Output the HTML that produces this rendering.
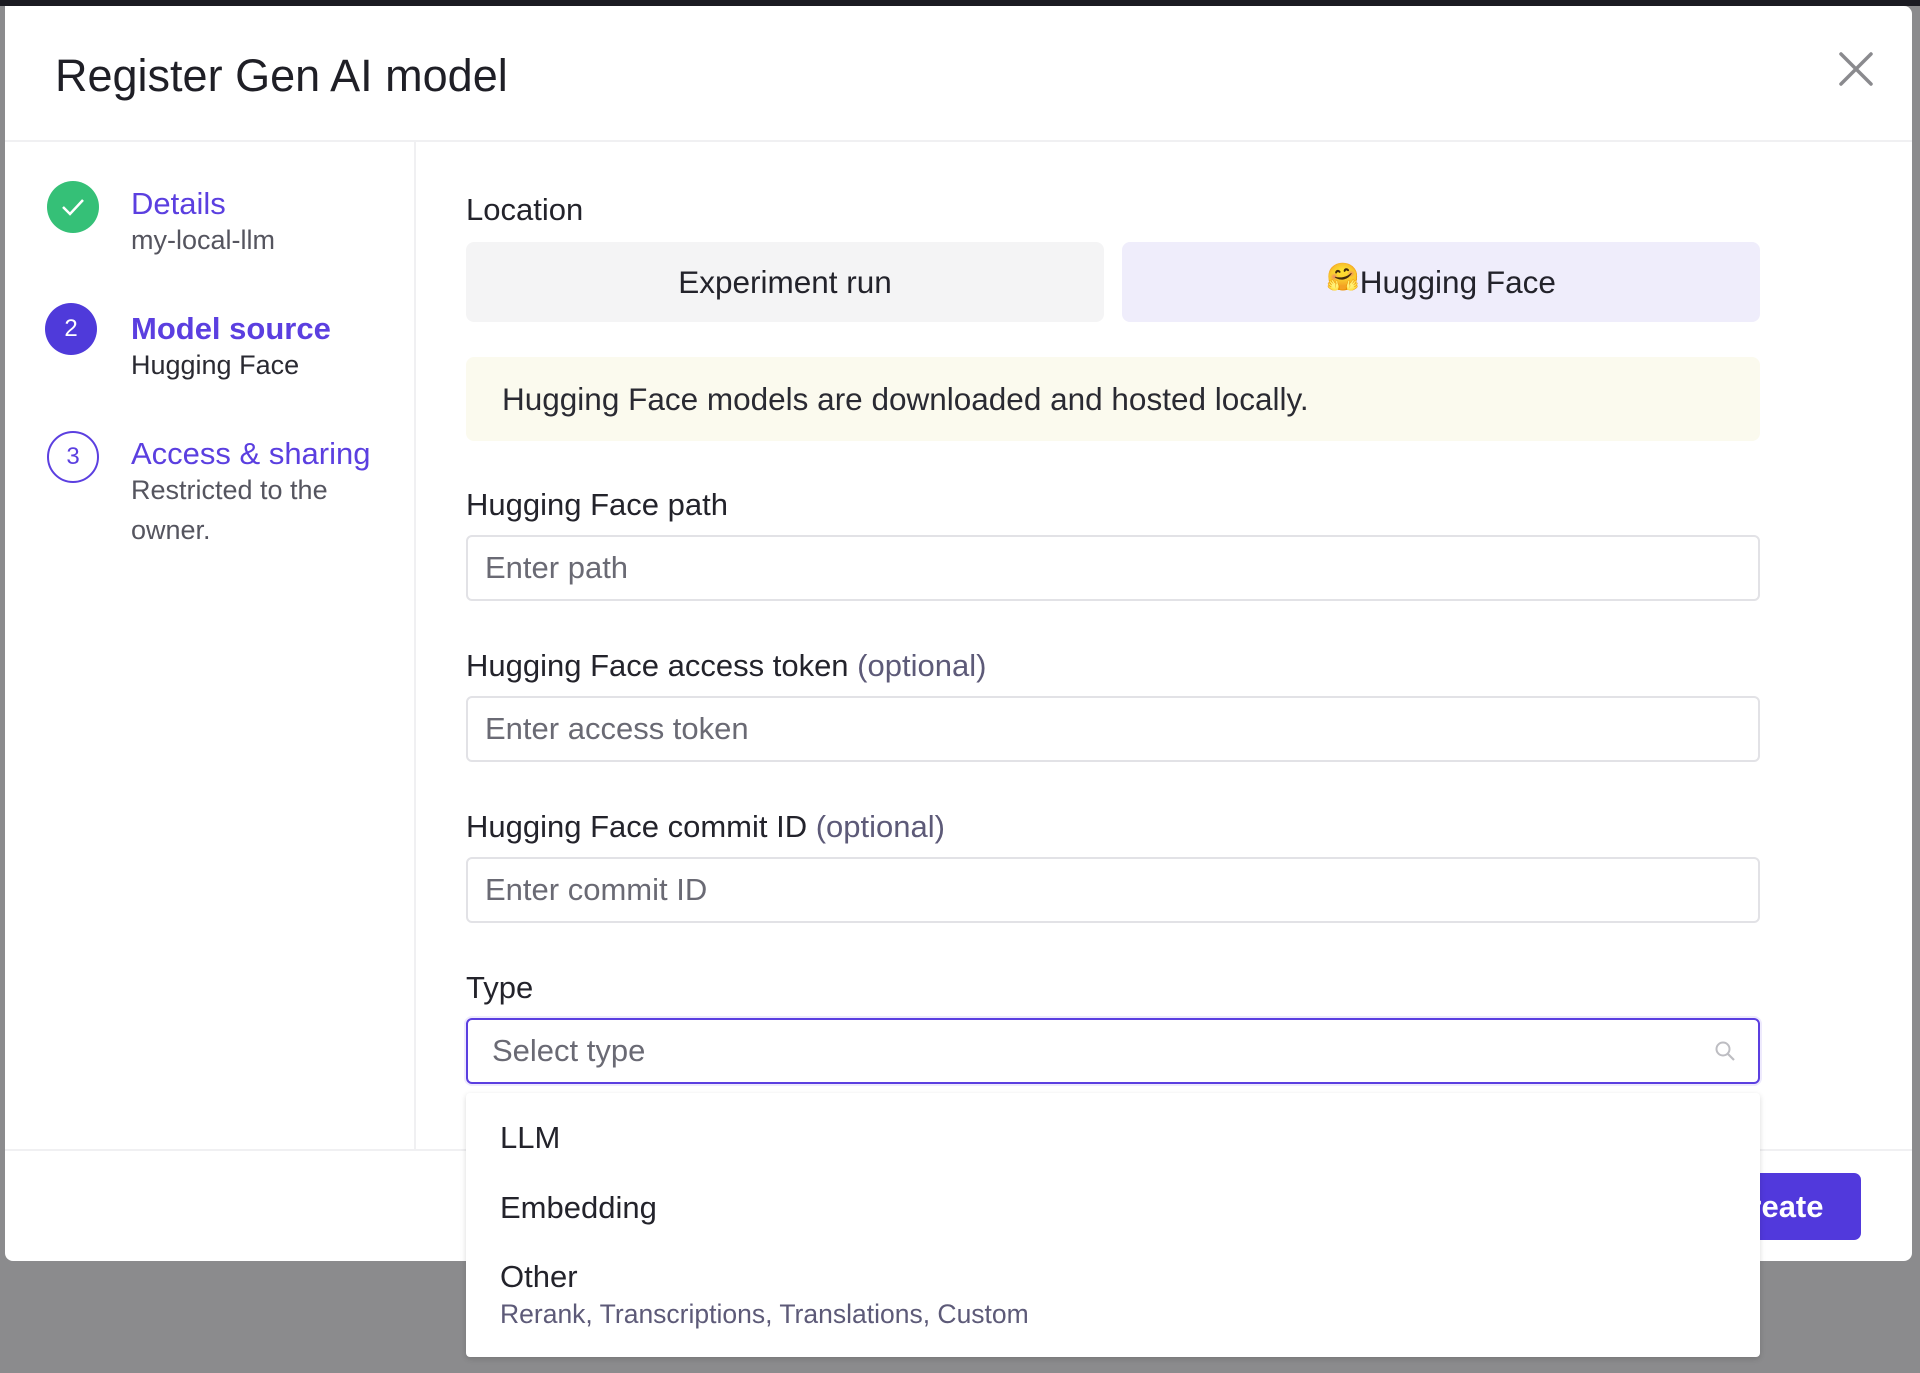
<!DOCTYPE html>
<html><head><style>
*{box-sizing:border-box;margin:0;padding:0}
body{width:1920px;height:1373px;background:#8b8b8d;font-family:"Liberation Sans",sans-serif;position:relative;overflow:hidden;color:#1f1f26}
.top{position:absolute;left:0;top:0;width:1920px;height:6px;background:#1b1b22}
.modal{position:absolute;left:5px;top:6px;width:1907px;height:1255px;background:#fff;border-radius:0 8px 8px 8px}
.abs{position:absolute}
.title{left:50px;top:44px;font-size:45px;color:#1f1f26}
.hsep{left:0;top:134px;width:1907px;height:2px;background:#f0f0f2}
.vsep{left:409px;top:136px;width:2px;height:1008px;background:#f0f0f2}
.fsep{left:0;top:1143px;width:1907px;height:2px;background:#f0f0f2}
.circ{width:52px;height:52px;border-radius:50%;display:flex;align-items:center;justify-content:center;font-size:24px}
.st{font-size:31px;color:#5b3fe0}
.sub{font-size:27px;color:#55555f}
.lbl{font-size:31px;color:#23232b;left:461px}
.opt{color:#5d5a78}
.inp{left:461px;width:1294px;height:66px;border:2px solid #e2e2e6;border-radius:6px;font-size:31px;color:#6a6a74;padding:0 0 0 17px;display:flex;align-items:center}
.tog{top:236px;height:80px;width:638px;border-radius:8px;display:flex;align-items:center;justify-content:center;font-size:31.5px;color:#23232b}
</style></head><body>
<div class="top"></div>
<div class="modal">
<div class="abs title">Register Gen AI model</div>
<svg class="abs" style="left:1833px;top:45px" width="36" height="36" viewBox="0 0 36 36"><path d="M3 3L33 33M33 3L3 33" stroke="#8a8a8e" stroke-width="3.5" stroke-linecap="round"/></svg>
<div class="abs hsep"></div><div class="abs vsep"></div><div class="abs fsep"></div>

<div class="abs circ" style="left:42px;top:175px;background:#35c077"><svg width="26" height="20" viewBox="0 0 26 20"><path d="M3 10l7 7L23 3" stroke="#fff" stroke-width="2.5" fill="none"/></svg></div>
<div class="abs st" style="left:126px;top:180px">Details</div>
<div class="abs sub" style="left:126px;top:219px">my-local-llm</div>

<div class="abs circ" style="left:40px;top:297px;background:#4f3ada;color:#fff">2</div>
<div class="abs st" style="left:126px;top:305px;font-weight:bold">Model source</div>
<div class="abs sub" style="left:126px;top:344px;color:#2a2a32">Hugging Face</div>

<div class="abs circ" style="left:42px;top:425px;border:2px solid #5b3fe0;color:#5b3fe0">3</div>
<div class="abs st" style="left:126px;top:430px">Access &amp; sharing</div>
<div class="abs sub" style="left:126px;top:469px">Restricted to the</div>
<div class="abs sub" style="left:126px;top:509px">owner.</div>

<div class="abs lbl" style="top:186px">Location</div>
<div class="abs tog" style="left:461px;background:#f4f4f5">Experiment run</div>
<div class="abs tog" style="left:1117px;background:#efedfb"><span style="font-size:27px;margin-top:-10px">🤗</span>Hugging Face</div>
<div class="abs" style="left:461px;top:351px;width:1294px;height:84px;background:#fbfaee;border-radius:8px;font-size:31.5px;color:#2a2a32;padding:0 0 0 36px;display:flex;align-items:center">Hugging Face models are downloaded and hosted locally.</div>

<div class="abs lbl" style="top:481px">Hugging Face path</div>
<div class="abs inp" style="top:529px">Enter path</div>
<div class="abs lbl" style="top:642px">Hugging Face access token <span class="opt">(optional)</span></div>
<div class="abs inp" style="top:690px">Enter access token</div>
<div class="abs lbl" style="top:803px">Hugging Face commit ID <span class="opt">(optional)</span></div>
<div class="abs inp" style="top:851px">Enter commit ID</div>
<div class="abs lbl" style="top:964px">Type</div>
<div class="abs inp" style="top:1012px;border:2px solid #5b3fe0;padding-left:24px;box-shadow:0 0 0 2px #eeeafd">Select type
<svg class="abs" style="right:20px;top:20px" width="24" height="24" viewBox="0 0 24 24"><circle cx="9" cy="9" r="6.5" stroke="#bdbdc2" stroke-width="2" fill="none"/><path d="M14 14l6 6" stroke="#bdbdc2" stroke-width="2.2"/></svg></div>

<div class="abs" style="left:1650px;top:1167px;width:206px;height:67px;background:#5139dc;border-radius:7px;color:#fff;font-size:31px;font-weight:bold;display:flex;align-items:center;padding-left:72px">Create</div>
</div>
<div class="abs" style="left:466px;top:1093px;width:1294px;height:264px;background:#fff;border-radius:4px;box-shadow:0 2px 6px rgba(0,0,0,.15)">
<div class="abs" style="left:34px;top:27px;font-size:31px;color:#23232b">LLM</div>
<div class="abs" style="left:34px;top:97px;font-size:31px;color:#23232b">Embedding</div>
<div class="abs" style="left:34px;top:166px;font-size:31px;color:#23232b">Other</div>
<div class="abs" style="left:34px;top:206px;font-size:26.5px;color:#5d5a78">Rerank, Transcriptions, Translations, Custom</div>
</div>
</body></html>
